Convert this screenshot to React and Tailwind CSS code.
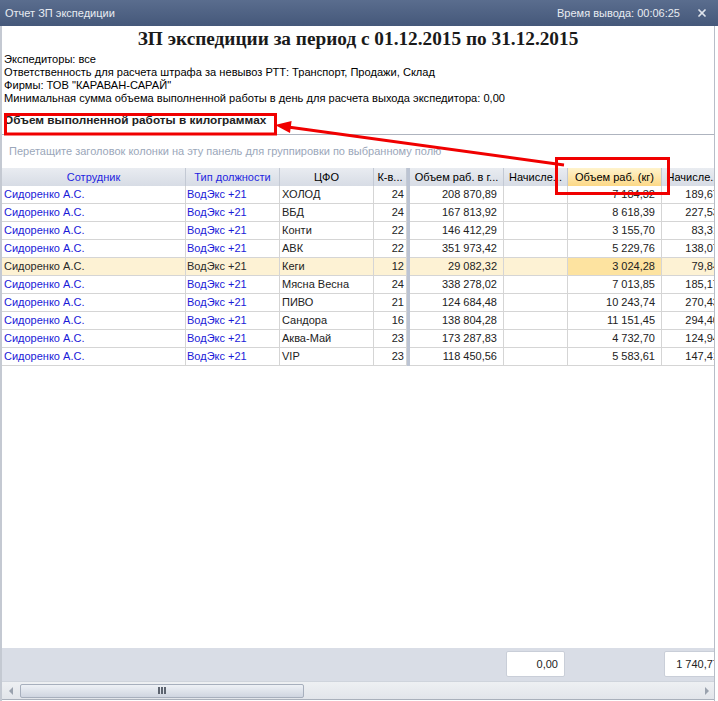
import { X } from "lucide-react";

const rows = [
    ["ХОЛОД", "24", "208 870,89", "7 184,32", "189,67"],
    ["ВБД", "24", "167 813,92", "8 618,39", "227,53"],
    ["Конти", "22", "146 412,29", "3 155,70", "83,31"],
    ["АВК", "22", "351 973,42", "5 229,76", "138,07"],
    ["Кеги", "12", "29 082,32", "3 024,28", "79,84"],
    ["Мясна Весна", "24", "338 278,02", "7 013,85", "185,17"],
    ["ПИВО", "21", "124 684,48", "10 243,74", "270,43"],
    ["Сандора", "16", "138 804,28", "11 151,45", "294,40"],
    ["Аква-Май", "23", "173 287,83", "4 732,70", "124,94"],
    ["VIP", "23", "118 450,56", "5 583,61", "147,41"],
];

const SELECTED = 4;

function HeaderCell({ className, children }) {
    return (
        <div className={"h-[18px] shrink-0 flex items-center justify-center border-r border-[#c3c9d4] whitespace-nowrap overflow-hidden " + className}>
            {children}
        </div>
    );
}

function Cell({ className, children }) {
    return (
        <div className={"h-[18px] shrink-0 flex items-center border-r border-b border-[#d5d5d5] whitespace-nowrap overflow-hidden " + className}>
            {children}
        </div>
    );
}

function Divider() {
    return <div className="w-[3px] shrink-0 bg-[#bcc4d3]" />;
}

export default function App() {
    return (
        <div
            className="relative w-[718px] h-[701px] overflow-hidden bg-white flex flex-col text-[11px] text-black"
            style={{ fontFamily: '"Liberation Sans", Arial, sans-serif' }}
        >
            {/* window title */}
            <div className="h-[26px] shrink-0 flex items-center justify-between pl-[5px] pr-[10px] bg-gradient-to-b from-[#5a6d8e] to-[#45587a] text-[11px] text-[#e8ecf2]">
                <span>Отчет ЗП экспедиции</span>
                <div className="flex items-center gap-[16px]">
                    <span>Время вывода: 00:06:25</span>
                    <X size={12} strokeWidth={3.5} className="text-[#dfe4ec]" />
                </div>
            </div>

            <div className="flex-1 flex flex-col border-l-2 border-[#c4c9d2] border-r mr-[3px] border-r-[#b7bdc8] overflow-hidden">
                <div
                    className="h-[27px] shrink-0 flex items-center justify-center text-[19.3px] font-bold text-[#1a1a1a]"
                    style={{ fontFamily: '"Liberation Serif", "Times New Roman", serif' }}
                >
                    ЗП экспедиции за период с 01.12.2015 по 31.12.2015
                </div>
                <div className="pl-[2px] leading-[13px] text-[11.1px]">
                    <div>Экспедиторы: все</div>
                    <div>Ответственность для расчета штрафа за невывоз РТТ: Транспорт, Продажи, Склад</div>
                    <div>Фирмы: ТОВ "КАРАВАН-САРАЙ"</div>
                    <div>Минимальная сумма объема выполненной работы в день для расчета выхода экспедитора: 0,00</div>
                </div>
                <div className="h-[29px] shrink-0 flex items-center pt-[3px] pl-[2px] text-[11.8px] font-bold text-[#222]">
                    Объем выполненной работы в килограммах
                </div>

                {/* grid */}
                <div className="flex-1 flex flex-col border-t border-[#aeb4bf] overflow-hidden">
                    <div className="h-[33px] shrink-0 flex items-center pl-[7px] text-[#9ba7ba]">
                        Перетащите заголовок колонки на эту панель для группировки по выбранному полю
                    </div>

                    <div className="flex h-[18px] shrink-0 bg-gradient-to-b from-[#e9ecf1] to-[#d7dce5]">
                        <HeaderCell className="w-[184px] text-[#1f1fe0]">Сотрудник</HeaderCell>
                        <HeaderCell className="w-[94px] text-[#1f1fe0]">Тип должности</HeaderCell>
                        <HeaderCell className="w-[94px]">ЦФО</HeaderCell>
                        <HeaderCell className="w-[33px]">К-в...</HeaderCell>
                        <Divider />
                        <HeaderCell className="w-[94px]">Объем раб. в г...</HeaderCell>
                        <HeaderCell className="w-[64px]">Начисле...</HeaderCell>
                        <HeaderCell className="w-[94px] bg-gradient-to-b from-[#fff3cc] to-[#fcd886]">Объем раб. (кг)</HeaderCell>
                        <HeaderCell className="w-[62px] border-r-0">Начисле...</HeaderCell>
                    </div>

                    {rows.map((r, i) => {
                        const sel = i === SELECTED;
                        const link = sel ? "text-[#2a2a2a]" : "text-[#1a1ad8]";
                        return (
                            <div key={i} className={"flex shrink-0 " + (sel ? "bg-[#fdf2d4]" : "")}>
                                <Cell className={"w-[184px] pl-[2px] " + link}>Сидоренко А.С.</Cell>
                                <Cell className={"w-[94px] pl-[1px] " + link}>ВодЭкс +21</Cell>
                                <Cell className="w-[94px] pl-[2px] text-[#222]">{r[0]}</Cell>
                                <Cell className="w-[33px] justify-end pr-[2px] text-[#222]">{r[1]}</Cell>
                                <Divider />
                                <Cell className="w-[94px] justify-end pr-[6px] text-[#222]">{r[2]}</Cell>
                                <Cell className="w-[64px]" />
                                <Cell className={"w-[94px] justify-end pr-[6px] text-[#222] " + (sel ? "bg-[#fde3a0]" : "")}>{r[3]}</Cell>
                                <Cell className="w-[62px] justify-end pr-[5px] text-[#222] border-r-0">{r[4]}</Cell>
                            </div>
                        );
                    })}

                    <div className="flex-1" />

                    {/* totals */}
                    <div className="h-[33px] shrink-0 flex bg-[#d9dde6]">
                        <div className="w-[502px] shrink-0" />
                        <div className="w-[64px] shrink-0 pt-[3px] pl-[2px] pr-[3px]">
                            <div className="h-[26px] bg-white border border-[#c9ced8] rounded-[2px] flex items-center justify-end pr-[6px] text-[#222]">0,00</div>
                        </div>
                        <div className="w-[94px] shrink-0" />
                        <div className="w-[62px] shrink-0 pt-[3px] pl-[2px]">
                            <div className="h-[26px] bg-white border border-[#c9ced8] rounded-[2px] flex items-center justify-end pr-[4px] text-[#222]">1 740,77</div>
                        </div>
                    </div>

                    {/* horizontal scroll */}
                    <div className="h-[18px] shrink-0 flex items-center bg-gradient-to-b from-[#eef0f3] to-[#e2e5ea] border-t border-[#cfd4dc]">
                        <div className="w-[18px] flex justify-center">
                            <div className="w-0 h-0 border-y-[4px] border-y-transparent border-r-[4px] border-r-[#9aa2ae]" />
                        </div>
                        <div className="w-[284px] h-[14px] rounded-[2px] border border-[#a7afbd] bg-gradient-to-b from-[#eef1f6] to-[#cfd5e0] flex items-center justify-center gap-[1px]">
                            <div className="w-[2px] h-[7px] bg-[#5d6470]" />
                            <div className="w-[2px] h-[7px] bg-[#5d6470]" />
                            <div className="w-[2px] h-[7px] bg-[#5d6470]" />
                        </div>
                        <div className="flex-1" />
                        <div className="w-[14px] flex justify-center">
                            <div className="w-0 h-0 border-y-[4px] border-y-transparent border-l-[4px] border-l-[#9aa2ae]" />
                        </div>
                    </div>
                </div>
                <div className="h-[2px] shrink-0 border-t border-[#a9b0bb]" />
            </div>

            {/* annotation overlay */}
            <svg className="absolute left-0 top-0 pointer-events-none" width="718" height="701">
                <rect x="5.5" y="114.5" width="270" height="19.5" fill="none" stroke="#f00000" strokeWidth="3" />
                <rect x="556.5" y="158.5" width="112" height="35" fill="none" stroke="#f00000" strokeWidth="3" />
                <line x1="288" y1="127" x2="564" y2="165" stroke="#f00000" strokeWidth="3" />
                <polygon points="275,125 291.6,121 290,133" fill="#f00000" />
            </svg>
        </div>
    );
}
